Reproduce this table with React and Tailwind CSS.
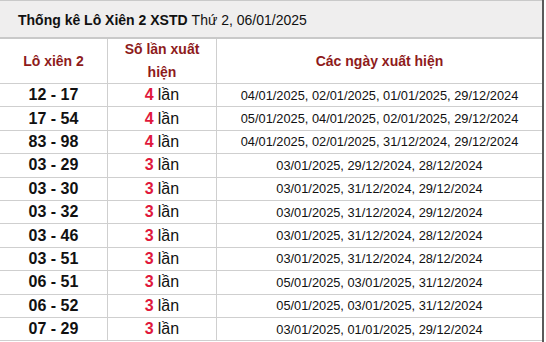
import React from 'react';

const rows = [
  ['12 - 17', 4, '04/01/2025, 02/01/2025, 01/01/2025, 29/12/2024'],
  ['17 - 54', 4, '05/01/2025, 04/01/2025, 02/01/2025, 29/12/2024'],
  ['83 - 98', 4, '04/01/2025, 02/01/2025, 31/12/2024, 29/12/2024'],
  ['03 - 29', 3, '03/01/2025, 29/12/2024, 28/12/2024'],
  ['03 - 30', 3, '03/01/2025, 31/12/2024, 29/12/2024'],
  ['03 - 32', 3, '03/01/2025, 31/12/2024, 29/12/2024'],
  ['03 - 46', 3, '03/01/2025, 31/12/2024, 28/12/2024'],
  ['03 - 51', 3, '03/01/2025, 31/12/2024, 28/12/2024'],
  ['06 - 51', 3, '05/01/2025, 03/01/2025, 31/12/2024'],
  ['06 - 52', 3, '05/01/2025, 03/01/2025, 31/12/2024'],
  ['07 - 29', 3, '03/01/2025, 01/01/2025, 29/12/2024'],
];

function App() {
  return (
    <div className="w-[546px] h-[342px] overflow-hidden bg-white font-['Liberation_Sans',Arial,sans-serif] text-[#111]">
      <div className="w-[544px] border-r-2 border-[#5a5a5a] h-[342px]">
        {/* tiêu đề */}
        <div className="h-[39px] bg-[#efeeee] border-t border-b-2 border-[#c9c9c9] flex items-center pl-[18px] pt-[3px] text-[14px]">
          <span className="font-bold">Thống kê Lô Xiên 2 XSTD</span>
          <span className="ml-1">Thứ 2, 06/01/2025</span>
        </div>

        <div className="grid grid-cols-[108px_109px_1fr]">
          <div className="h-[45px] border-r border-b border-[#cfcfcf] flex items-center justify-center font-bold text-[14px] text-[#8e1b1b]">
            Lô xiên 2
          </div>
          <div className="h-[45px] border-r border-b border-[#cfcfcf] flex items-center justify-center text-center font-bold text-[14px] leading-[23px] text-[#8e1b1b]">
            Số lần xuất<br />hiện
          </div>
          <div className="h-[45px] border-b border-[#cfcfcf] flex items-center justify-center font-bold text-[14px] text-[#8e1b1b]">
            Các ngày xuất hiện
          </div>

          {rows.map(([pair, count, dates]) => (
            <React.Fragment key={pair}>
              <div className="h-[23.4px] border-r border-b border-[#cfcfcf] flex items-center justify-center font-bold text-[16px]">
                {pair}
              </div>
              <div className="h-[23.4px] border-r border-b border-[#cfcfcf] flex items-center justify-center text-[16px]">
                <span className="font-bold text-[#e0183c] mr-1">{count}</span>lần
              </div>
              <div className="h-[23.4px] border-b border-[#cfcfcf] flex items-center justify-center text-[12.8px]">
                {dates}
              </div>
            </React.Fragment>
          ))}
        </div>
      </div>
    </div>
  );
}

export default App;
